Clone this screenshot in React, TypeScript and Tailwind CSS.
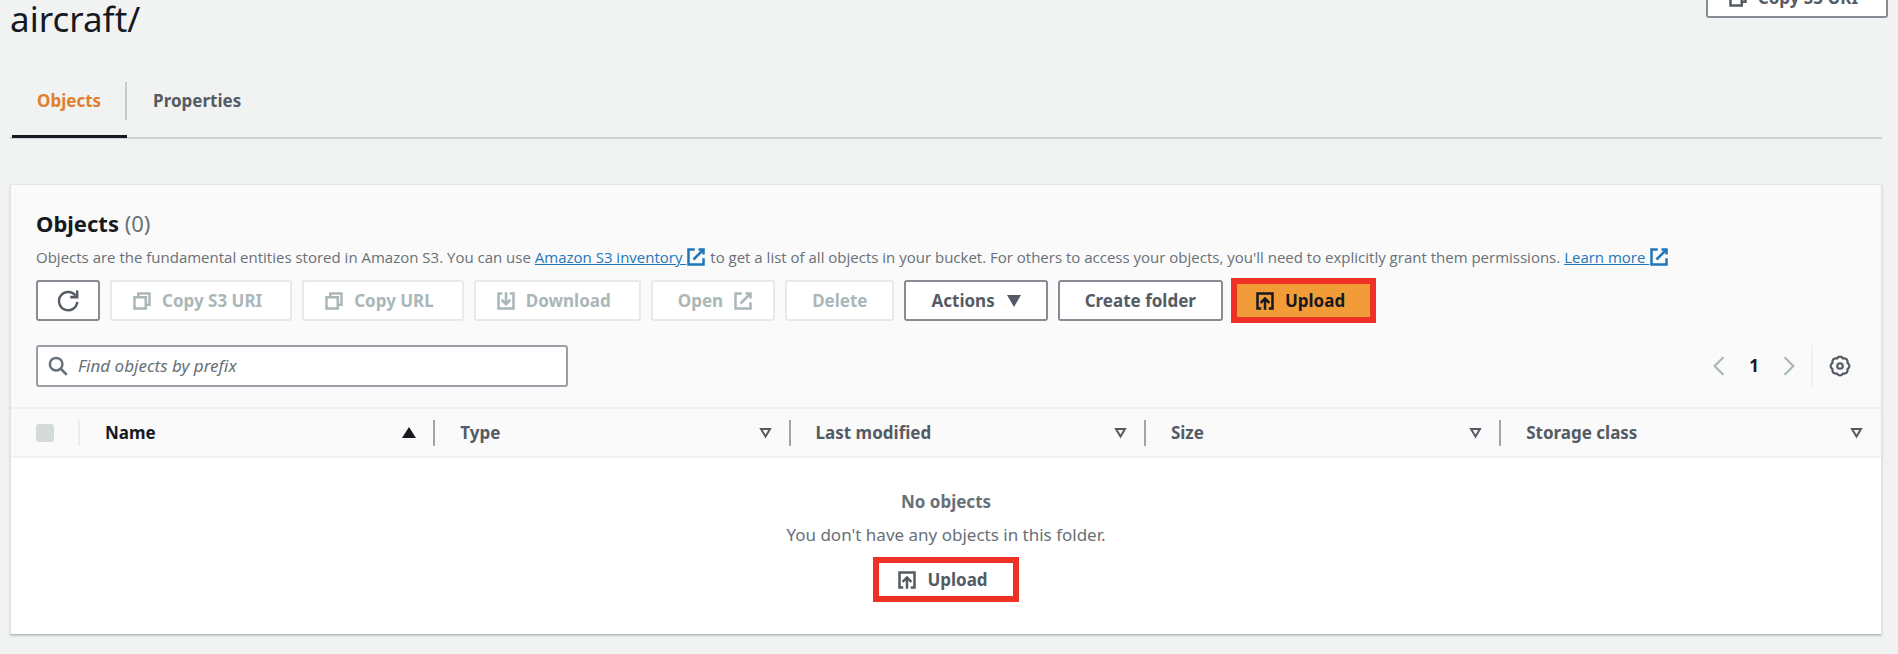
import { useState, type ReactNode } from 'react';

function Icon({ children, className = 'size-5' }: { children: ReactNode; className?: string }) {
  return (
    <svg viewBox="0 0 16 16" className={`${className} shrink-0`} fill="none" stroke="currentColor" strokeWidth="2" aria-hidden="true">
      {children}
    </svg>
  );
}

const CopyIcon = () => (
  <Icon>
    <path d="M2 5h9v9H2z" />
    <path d="M5 5V2h9v9h-3" />
  </Icon>
);

const DownloadIcon = () => (
  <Icon>
    <path d="M5 2H2v12h12V2h-3" />
    <path d="M8 1v9M4.5 7L8 10.5 11.5 7" />
  </Icon>
);

const UploadIcon = () => (
  <Icon>
    <path d="M5 14H2V2h12v12h-3" />
    <path d="M8 15V6M4.5 9.5L8 6l3.5 3.5" />
  </Icon>
);

const ExternalIcon = ({ className }: { className?: string }) => (
  <Icon className={className}>
    <path d="M10 2h4v4" />
    <path d="M6 10l8-8" />
    <path d="M14 9v5H2V2h5" />
  </Icon>
);

const RefreshIcon = () => (
  <Icon className="size-6">
    <path d="M9.5 5.4h4.6V1" strokeWidth="1.7" />
    <path d="M14.2 8.6a6.1 6.1 0 1 1-1.2-4.2" strokeWidth="1.6" />
  </Icon>
);

// Outline of a cog with eight rounded teeth.
const cogPath =
  'M' +
  Array.from({ length: 96 }, (_, i) => {
    const a = (i / 96) * Math.PI * 2;
    const r = 6.2 + 0.6 * Math.abs(Math.cos(4 * a)) * 1.5 - 0.3;
    return `${(8 + r * Math.cos(a)).toFixed(2)} ${(8 + r * Math.sin(a)).toFixed(2)}`;
  }).join('L') +
  'Z';

const CogIcon = () => (
  <Icon className="size-[22px]">
    <path d={cogPath} strokeWidth="1.6" />
    <circle cx="8" cy="8" r="2" strokeWidth="1.6" />
  </Icon>
);

type ButtonProps = { children: ReactNode; disabled?: boolean; className?: string; label?: string };

function Button({ children, disabled, className = 'gap-3 px-[25px]', label }: ButtonProps) {
  return (
    <button
      type="button"
      disabled={disabled}
      aria-label={label}
      className={`flex h-[41px] items-center justify-center rounded-[3px] border-2 bg-white font-bold whitespace-nowrap ${
        disabled ? 'border-[#e6eaea] text-[#aab7b8]' : 'border-[#878c94] text-[#545b64]'
      } ${className}`}
    >
      {children}
    </button>
  );
}

const columns = ['Name', 'Type', 'Last modified', 'Size', 'Storage class'];

export default function App() {
  const [query, setQuery] = useState('');
  return (
    <main className="min-h-screen overflow-hidden bg-[#f1f3f3] px-2.5 font-['Noto_Sans',sans-serif] text-[17px] text-[#545b64]">
      <header className="flex h-9 items-start justify-between">
        <h1 className="text-[35px] leading-[38px] text-[#16191f]">aircraft/</h1>
        <div className="-mt-[23px]">
          <Button className="gap-2.5 pr-7 pl-5">
            <CopyIcon />
            Copy S3 URI
          </Button>
        </div>
      </header>

      <nav className="mt-[46px] mr-1.5 flex border-b-2 border-[#ccd3d3]" role="tablist">
        <button type="button" role="tab" aria-selected="true" className="-mb-px ml-0.5 border-b-[3px] border-[#16191f] pb-[15px]">
          <span className="flex h-[38px] items-center border-r-2 border-[#c3cccc] pr-6 pl-[25px] font-bold text-[#e07f2f]">Objects</span>
        </button>
        <button type="button" role="tab" aria-selected="false" className="flex h-[38px] items-center px-[26px] font-bold">
          Properties
        </button>
      </nav>

      <section className="mt-[45px] mr-1.5 border border-[#e2e5e7] border-b-[#b4bcbf] bg-white shadow-[0_1px_2px_#00000030]">
        <div className="bg-[#fafafa]">
          <div className="px-[25px] pt-6 pb-5">
            <h2 className="text-[22px] leading-7 font-bold text-[#16191f]">
              Objects <span className="font-normal text-[#687078]">(0)</span>
            </h2>
            <p className="mt-2 font-['Open_Sans',sans-serif] text-[15px] leading-6 text-[#687078]">
              Objects are the fundamental entities stored in Amazon S3. You can use{' '}
              <a href="#inventory" className="text-[#1f76b8] underline">
                Amazon S3 inventory <ExternalIcon className="inline size-5 align-[-4px]" />
              </a>{' '}
              to get a list of all objects in your bucket. For others to access your objects, you'll need to explicitly grant them
              permissions.{' '}
              <a href="#learn" className="text-[#1f76b8] underline">
                Learn more <ExternalIcon className="inline size-5 align-[-4px]" />
              </a>
            </p>
            <div className="mt-[11px] flex flex-wrap items-center gap-2.5">
              <Button label="Refresh" className="px-[18px]">
                <RefreshIcon />
              </Button>
              <Button disabled className="gap-2.5 pr-7 pl-5">
                <CopyIcon />
                Copy S3 URI
              </Button>
              <Button disabled className="gap-2.5 pr-7 pl-5">
                <CopyIcon />
                Copy URL
              </Button>
              <Button disabled className="gap-2.5 pr-7 pl-5">
                <DownloadIcon />
                Download
              </Button>
              <Button disabled className="gap-2.5 pr-5 pl-[25px]">
                Open
                <ExternalIcon />
              </Button>
              <Button disabled>Delete</Button>
              <Button>
                Actions
                <svg viewBox="0 0 14 12" className="h-3 w-3.5" fill="currentColor" aria-hidden="true">
                  <path d="M0 0h14L7 12z" />
                </svg>
              </Button>
              <Button>Create folder</Button>
              <button
                type="button"
                className="-my-0.5 -ml-0.5 flex h-[45px] items-center gap-2.5 border-6 border-[#ee3124] bg-[#f29c38] pr-[25px] pl-[18px] font-bold text-[#16191f]"
              >
                <UploadIcon />
                Upload
              </button>
            </div>
            <div className="mt-6 flex items-center justify-between">
              <label className="flex h-[42px] w-[532px] items-center gap-2.5 rounded-[3px] border-2 border-[#9a9fa5] bg-white px-2.5 text-[#687078]">
                <Icon>
                  <circle cx="6.5" cy="6.5" r="5" />
                  <path d="M10 10l5 5" />
                </Icon>
                <input
                  type="text"
                  aria-label="Find objects by prefix"
                  placeholder="Find objects by prefix"
                  value={query}
                  onChange={(e) => setQuery(e.target.value)}
                  className="min-w-0 flex-1 bg-transparent outline-none placeholder:text-[#687078] placeholder:italic"
                />
              </label>
              <div className="mr-[5px] flex h-[42px] items-center">
                <button type="button" aria-label="Previous page" disabled className="text-[#aab7b8]">
                  <Icon>
                    <path d="M11.5 1l-7 7 7 7" strokeWidth="1.8" />
                  </Icon>
                </button>
                <button type="button" className="px-5 font-bold text-[#16191f]">
                  1
                </button>
                <button type="button" aria-label="Next page" disabled className="text-[#aab7b8]">
                  <Icon>
                    <path d="M4.5 1l7 7-7 7" strokeWidth="1.8" />
                  </Icon>
                </button>
                <button type="button" aria-label="Preferences" className="ml-3 flex h-full items-center border-l-2 border-[#eff1f1] pl-4">
                  <CogIcon />
                </button>
              </div>
            </div>
          </div>
        </div>
        <table className="w-full table-fixed border-collapse">
          <colgroup>
            <col className="w-[69px]" />
            <col className="w-[19%]" />
            <col className="w-[19%]" />
            <col className="w-[19%]" />
            <col className="w-[19%]" />
            <col />
          </colgroup>
          <thead className="border-y-2 border-[#eff1f1] bg-[#fafafa]">
            <tr className="h-[49px]">
              <th className="p-0">
                <div className="flex h-[26px] items-center border-r-2 border-[#eaeded] pl-[25px]">
                  <input type="checkbox" disabled aria-label="Select all objects" className="size-[18px] appearance-none rounded-[3px] bg-[#d5dbdb]" />
                </div>
              </th>
              {columns.map((name, i) => (
                <th key={name} className="p-0">
                  <div
                    className={`flex h-[26px] items-center justify-between pl-[25px] ${
                      i === columns.length - 1 ? 'pr-[18px]' : 'border-r-2 border-[#9fa5aa] pr-[17px]'
                    } ${i === 0 ? 'text-[#16191f]' : ''}`}
                  >
                    {name}
                    {i === 0 ? (
                      <svg viewBox="0 0 14 11" className="h-[11px] w-3.5" fill="currentColor" aria-hidden="true">
                        <path d="M7 0l7 11H0z" />
                      </svg>
                    ) : (
                      <svg viewBox="0 0 13 12" className="h-3 w-[13px]" fill="none" stroke="currentColor" strokeWidth="2" aria-hidden="true">
                        <path d="M2 2h9L6.500 9.500z" />
                      </svg>
                    )}
                  </div>
                </th>
              ))}
            </tr>
          </thead>
          <tbody>
            <tr>
              <td colSpan={6} className="py-8 text-center">
                <p className="leading-6 font-bold text-[#687078]">No objects</p>
                <p className="mt-[9px] leading-6 text-[#687078]">You don't have any objects in this folder.</p>
                <button
                  type="button"
                  className="mx-auto mt-2.5 flex h-[45px] items-center gap-2.5 border-6 border-[#ee3124] bg-white pr-[25px] pl-[18px] font-bold"
                >
                  <UploadIcon />
                  Upload
                </button>
              </td>
            </tr>
          </tbody>
        </table>
      </section>
    </main>
  );
}
